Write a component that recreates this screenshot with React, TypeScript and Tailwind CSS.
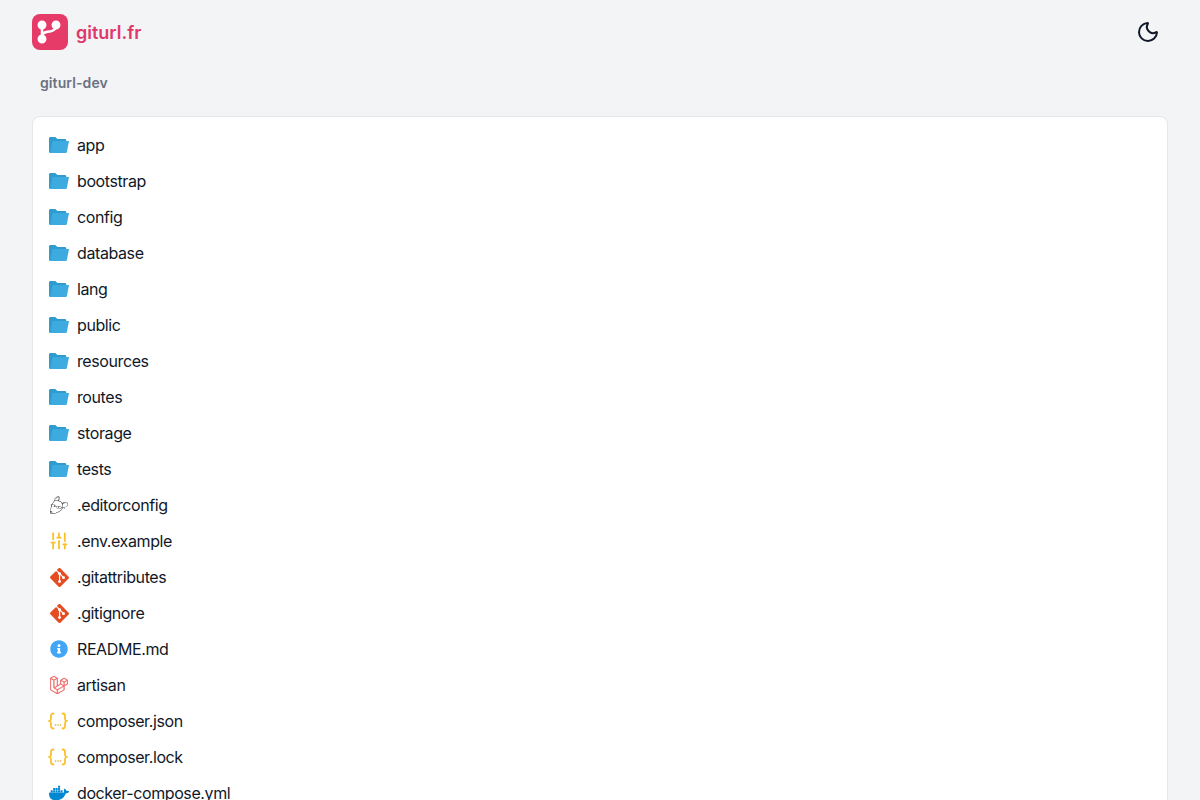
import { Moon, SlidersVertical } from 'lucide-react';
import { FaInfoCircle } from 'react-icons/fa';
import { SiDocker, SiEditorconfig, SiGit, SiLaravel } from 'react-icons/si';

const FolderIcon = () => (
  <svg viewBox="0 0 20 20" className="h-5 w-5 shrink-0 overflow-visible">
    <path
      d="M1 3.500C1 2.600 1.600 2 2.500 2h4.300c.4 0 .7.1 1 .4L9.500 4h7.300c.9 0 1.500.6 1.500 1.500V10L3 18H2.500C1.600 18 1 17.400 1 16.500V3.500z"
      fill="#2f9bcf"
    />
    <path
      d="M4.300 7.300C4.500 6.500 5 6 5.800 6H21l-2.100 10.700c-.2.800-.7 1.300-1.500 1.300H2.200z"
      fill="#3eabe0"
    />
  </svg>
);

const JsonIcon = () => (
  <svg viewBox="0 0 20 20" fill="none" stroke="#fbc02d" strokeWidth="1.800" strokeLinecap="round" className="h-5 w-5 shrink-0">
    <path d="M5.500 2.500c-1.800 0-2.500.8-2.500 2.200v3c0 1.100-.6 1.900-1.700 2.300 1.100.4 1.700 1.200 1.700 2.300v3c0 1.400.7 2.200 2.500 2.200" />
    <path d="M14.500 2.500c1.800 0 2.500.8 2.500 2.200v3c0 1.100.6 1.900 1.700 2.300-1.100.4-1.700 1.200-1.700 2.300v3c0 1.400-.7 2.200-2.500 2.200" />
    <path d="M7.500 14h.01M10 14h.01M12.500 14h.01" stroke="#e6c670" />
  </svg>
);

const GitIcon = () => <SiGit className="ml-[2px] mr-[-1px] h-[19px] w-[19px] shrink-0 text-[#e44c22]" />;

const folders = ['app', 'bootstrap', 'config', 'database', 'lang', 'public', 'resources', 'routes', 'storage', 'tests'];

const files = [
  { name: '.editorconfig', icon: <SiEditorconfig className="ml-[2px] h-[18px] w-[18px] shrink-0 text-[#333333]" /> },
  { name: '.env.example', icon: <SlidersVertical className="ml-[1px] mr-[-1px] h-5 w-5 shrink-0 text-[#fbc02d]" strokeWidth={2.2} /> },
  { name: '.gitattributes', icon: <GitIcon /> },
  { name: '.gitignore', icon: <GitIcon /> },
  { name: 'README.md', icon: <FaInfoCircle className="ml-[2px] h-[18px] w-[18px] shrink-0 text-[#42a5f5]" /> },
  { name: 'artisan', icon: <SiLaravel className="ml-[2px] h-[18px] w-[18px] shrink-0 stroke-[0.6px] text-[#ef5f5f]" /> },
  { name: 'composer.json', icon: <JsonIcon /> },
  { name: 'composer.lock', icon: <JsonIcon /> },
  { name: 'docker-compose.yml', icon: <SiDocker className="ml-[1px] mr-[-1px] h-5 w-5 shrink-0 text-[#0288d1]" /> },
];

const Row = ({ icon, name }: { icon: React.ReactNode; name: string }) => (
  <div className="flex h-9 items-center gap-[9px] px-[15px] text-base tracking-[-0.4px] text-gray-900">
    {icon}
    <span>{name}</span>
  </div>
);

export default function App() {
  return (
    <div className="h-[800px] overflow-hidden bg-gray-100 font-['Inter',sans-serif]">
      {/* Header */}
      <div className="flex items-center justify-between px-8 pt-3.5">
        <div className="flex items-center gap-2">
          <div className="flex h-9 w-9 items-center justify-center rounded-lg bg-[#e63a68]">
            <svg viewBox="0 0 36 36" fill="none" stroke="white" strokeWidth="2.500" className="h-9 w-9">
              <circle cx="10" cy="11" r="3.200" fill="white" />
              <circle cx="24" cy="11" r="3.200" fill="white" />
              <circle cx="10" cy="25" r="3.200" fill="white" />
              <path d="M10 11v14M24 11c0 4-2.500 6-6 6.500-4 .6-8 1-8 4.500" />
            </svg>
          </div>
          <span className="pt-0.5 text-lg font-semibold text-[#e0386a]">giturl.fr</span>
        </div>
        <Moon className="mr-[8px] h-6 w-6 text-gray-900" strokeWidth={2} />
      </div>

      {/* Breadcrumb */}
      <div className="mt-[23px] px-10 text-sm font-semibold tracking-[0.1px] text-gray-500">giturl-dev</div>

      {/* Listing */}
      <div className="mx-8 mt-[23px] rounded-lg border border-gray-200 bg-white py-2.5">
        {folders.map((name) => (
          <Row key={name} name={name} icon={<FolderIcon />} />
        ))}
        {files.map((file) => (
          <Row key={file.name} name={file.name} icon={file.icon} />
        ))}
      </div>
    </div>
  );
}
